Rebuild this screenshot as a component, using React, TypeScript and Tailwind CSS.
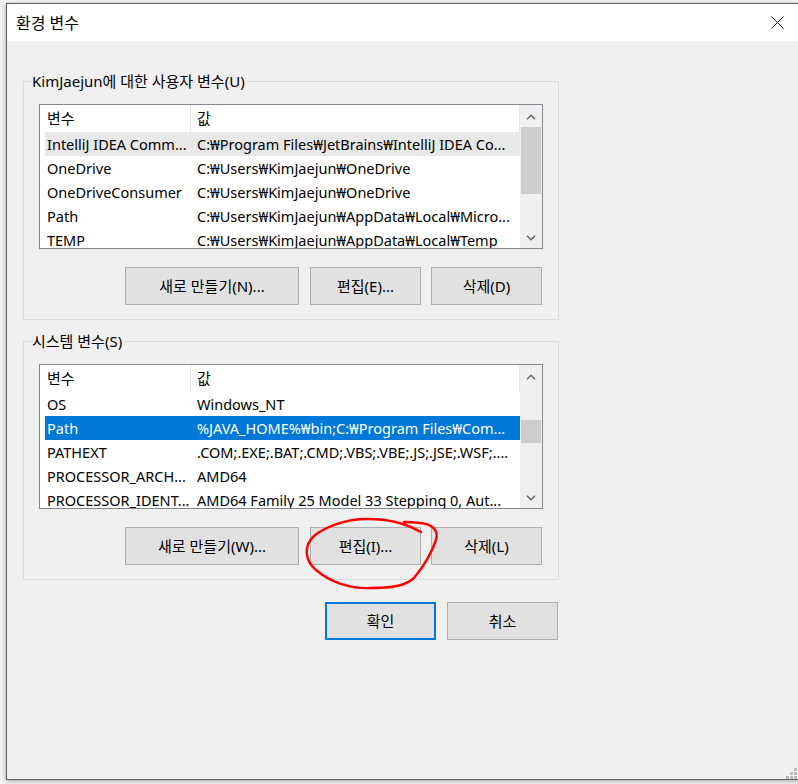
import React from "react";

type Row = { name: string; value: string; state?: "hover" | "selected" };

const userVars: Row[] = [
  { name: "IntelliJ IDEA Comm...", value: "C:₩Program Files₩JetBrains₩IntelliJ IDEA Co...", state: "hover" },
  { name: "OneDrive", value: "C:₩Users₩KimJaejun₩OneDrive" },
  { name: "OneDriveConsumer", value: "C:₩Users₩KimJaejun₩OneDrive" },
  { name: "Path", value: "C:₩Users₩KimJaejun₩AppData₩Local₩Micro..." },
  { name: "TEMP", value: "C:₩Users₩KimJaejun₩AppData₩Local₩Temp" },
];

const sysVars: Row[] = [
  { name: "OS", value: "Windows_NT" },
  { name: "Path", value: "%JAVA_HOME%₩bin;C:₩Program Files₩Com...", state: "selected" },
  { name: "PATHEXT", value: ".COM;.EXE;.BAT;.CMD;.VBS;.VBE;.JS;.JSE;.WSF;...." },
  { name: "PROCESSOR_ARCH...", value: "AMD64" },
  { name: "PROCESSOR_IDENT...", value: "AMD64 Family 25 Model 33 Stepping 0, Aut..." },
];

const Chevron = ({ down }: { down?: boolean }) => (
  <svg width="10" height="6" viewBox="0 0 10 6" className={down ? "rotate-180" : ""}>
    <path d="M1 5.2 L5 1.2 L9 5.2" fill="none" stroke="#606060" strokeWidth="1.4" />
  </svg>
);

const ListView = ({ rows, thumbTop, thumbHeight }: { rows: Row[]; thumbTop: number; thumbHeight: number }) => (
  <div className="flex h-[145px] w-[504px] border border-[#828790] bg-white">
    <div className="flex-1 overflow-hidden pl-[5px]">
      {/* header */}
      <div className="flex h-[27px] items-center">
        <div className="h-full w-[146px] border-r border-[#e5e5e5] pl-[2px] leading-[27px]">변수</div>
        <div className="h-full flex-1 border-r border-[#e5e5e5] pl-[6px] leading-[27px]">값</div>
      </div>
      {rows.map((r) => (
        <div
          key={r.name}
          className={
            "flex h-[24px] items-center text-[14.5px] leading-[24px] whitespace-nowrap " +
            (r.state === "selected" ? "bg-[#0078d7] text-white" : r.state === "hover" ? "bg-[#e8e8e8]" : "")
          }
        >
          <div className="w-[146px] overflow-hidden pl-[2px]">{r.name}</div>
          <div className="flex-1 overflow-hidden pl-[6px]">{r.value}</div>
        </div>
      ))}
    </div>
    {/* scrollbar */}
    <div className="flex w-[22px] flex-col bg-[#f0f0f0]">
      <div className="flex h-[21px] items-center justify-center pt-[3px]">
        <Chevron />
      </div>
      <div className="flex-1 px-[1px]">
        <div style={{ marginTop: thumbTop, height: thumbHeight }} className="bg-[#cdcdcd]" />
      </div>
      <div className="flex h-[21px] items-center justify-center">
        <Chevron down />
      </div>
    </div>
  </div>
);

const Btn = ({ text, w, def }: { text: string; w: string; def?: boolean }) => (
  <div
    className={
      "flex h-[38px] items-center justify-center bg-[#e1e1e1] " +
      w +
      (def ? " border-2 border-[#0078d7]" : " border border-[#adadad]")
    }
  >
    {text}
  </div>
);

const Group = ({
  label,
  rows,
  thumbTop,
  thumbHeight,
  buttons,
  className,
}: {
  label: string;
  rows: Row[];
  thumbTop: number;
  thumbHeight: number;
  buttons: string[];
  className: string;
}) => (
  <div className={"relative w-[536px] border border-[#dcdcdc] px-[15px] pt-[22px] pb-[14px] " + className}>
    <div className="absolute -top-[11px] left-[7px] bg-[#f0f0f0] pl-[1px] pr-[2px] leading-[20px]">{label}</div>
    <ListView rows={rows} thumbTop={thumbTop} thumbHeight={thumbHeight} />
    <div className="mt-[18px] flex justify-end pr-[1px]">
      <Btn text={buttons[0]} w="w-[174px]" />
      <div className="w-[11px]" />
      <Btn text={buttons[1]} w="w-[111px]" />
      <div className="w-[10px]" />
      <Btn text={buttons[2]} w="w-[111px]" />
    </div>
  </div>
);

export default function App() {
  return (
    <div className="relative h-[784px] w-[798px] overflow-hidden bg-[#f4f4f4] font-['Noto_Sans','Noto_Sans_CJK_KR',sans-serif] text-[15px] text-black">
      <div className="relative ml-[6px] mt-[3px] flex h-[777px] w-[794px] flex-col border-t border-b border-l border-[#606060] bg-[#f0f0f0] shadow-[0_1px_5px_rgba(0,0,0,0.35)]">
        {/* title bar */}
        <div className="flex h-[37px] items-center justify-between bg-white pl-[9px] pr-[16px]">
          <span className="text-[16px]">환경 변수</span>
          <svg width="13" height="13" viewBox="0 0 13 13">
            <path d="M0.5 0.5 L12.5 12.5 M12.5 0.5 L0.5 12.5" stroke="#111" strokeWidth="1" />
          </svg>
        </div>

        {/* body */}
        <div className="flex flex-col px-[16px]">
          <Group
            className="mt-[40px]"
            label="KimJaejun에 대한 사용자 변수(U)"
            rows={userVars}
            thumbTop={1}
            thumbHeight={67}
            buttons={["새로 만들기(N)...", "편집(E)...", "삭제(D)"]}
          />
          <Group
            className="mt-[21px]"
            label="시스템 변수(S)"
            rows={sysVars}
            thumbTop={34}
            thumbHeight={23}
            buttons={["새로 만들기(W)...", "편집(I)...", "삭제(L)"]}
          />
          <div className="mt-[22px] flex w-[536px] justify-end gap-[11px] pr-[1px]">
            <Btn text="확인" w="w-[111px]" def />
            <Btn text="취소" w="w-[111px]" />
          </div>
        </div>

        {/* resize grip */}
        <div className="absolute right-[3px] bottom-0 grid grid-cols-3 gap-[1px]">
          <div className="h-[3px] w-[3px]" />
          <div className="h-[3px] w-[3px]" />
          <div className="h-[3px] w-[3px] bg-[#bcbcbc]" />
          <div className="h-[3px] w-[3px]" />
          <div className="h-[3px] w-[3px] bg-[#bcbcbc]" />
          <div className="h-[3px] w-[3px] bg-[#bcbcbc]" />
          <div className="h-[3px] w-[3px] bg-[#bcbcbc]" />
          <div className="h-[3px] w-[3px] bg-[#bcbcbc]" />
          <div className="h-[3px] w-[3px] bg-[#bcbcbc]" />
        </div>
      </div>

      {/* red hand-drawn circle */}
      <svg className="pointer-events-none absolute inset-0" width="798" height="784" viewBox="0 0 798 784">
        <path
          d="M421 532 C410 526 395 519 367 519 C345 519 325 527 314 536 C304 545 304 560 316 570 C330 582 350 589 370 588 C392 588 405 586 414 578 C424 566 432 552 436 540 C439 530 432 524 420 523 C412 522 407 522 404 522"
          fill="none"
          stroke="#ff0000"
          strokeWidth="2.4"
          strokeLinecap="round"
        />
      </svg>
    </div>
  );
}
